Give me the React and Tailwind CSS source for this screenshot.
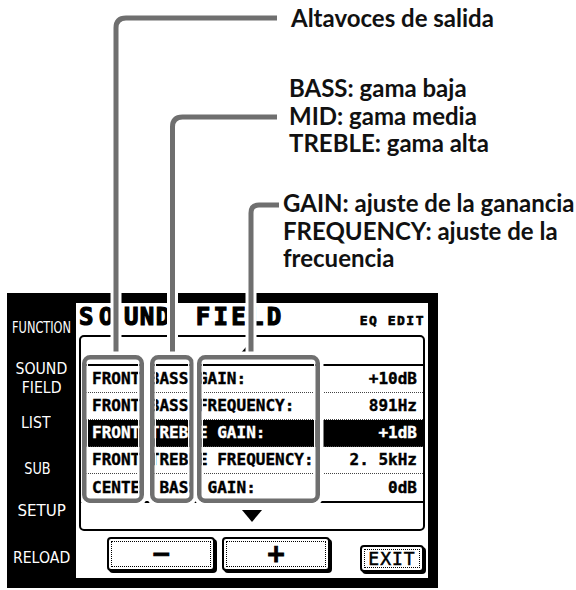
import React from 'react';

const rows = [
  { label: 'FRONT BASS GAIN:', value: '+10dB' },
  { label: 'FRONT BASS FREQUENCY:', value: '891Hz' },
  { label: 'FRONT TREBLE GAIN:', value: '+1dB', active: true },
  { label: 'FRONT TREBLE FREQUENCY:', value: '2. 5kHz' },
  { label: 'CENTER BASS GAIN:', value: '0dB' },
];

// callout leader lines and the grey frames over the list
const Callouts = () => {
  const gray = '#6f6f6f';
  const lines = [
    'M116 356 V28 Q116 18 126 18 H277',
    'M172.5 356 V127 Q172.5 117 182.5 117 H277',
    'M251 356 V213 Q251 205 259 205 H279',
  ];
  const frames = [
    [82, 144],
    [150, 194],
    [197, 320],
  ];
  const y0 = 355;
  const y1 = 503;

  return (
    <svg className="absolute inset-0 pointer-events-none" width="576" height="590" viewBox="0 0 576 590">
      {lines.map((d) => (
        <path key={'w' + d} d={d} fill="none" stroke="#fff" strokeWidth="11" />
      ))}
      {lines.map((d) => (
        <path key={'g' + d} d={d} fill="none" stroke={gray} strokeWidth="5" />
      ))}
      {frames.map(([x0, x1]) => (
        <g key={x0}>
          <rect x={x0 - 1.5} y={y0 - 1.5} width={x1 - x0 + 3} height={y1 - y0 + 3} rx="9.5" fill="none" stroke="#fff" strokeWidth="4" />
          <rect x={x0 + 5.25} y={y0 + 5.25} width={x1 - x0 - 10.5} height={y1 - y0 - 10.5} rx="3" fill="none" stroke="#fff" strokeWidth="1.5" />
          <rect x={x0 + 2.25} y={y0 + 2.25} width={x1 - x0 - 4.5} height={y1 - y0 - 4.5} rx="6" fill="none" stroke={gray} strokeWidth="4.5" />
        </g>
      ))}
      {/* left edge of the list box stays visible next to the first frame */}
      <line x1="80" y1="350" x2="80" y2="508" stroke="#000" strokeWidth="2" />
    </svg>
  );
};

const Sidebar = () => {
  const label = "flex flex-col items-center text-white text-[16px] leading-[17px] font-['DejaVu_Sans',sans-serif] whitespace-nowrap";
  return (
    <div className="w-[69px] flex flex-col pt-[16px]">
      <div className={label}>
        <span className="[transform:scaleX(0.71)]">FUNCTION</span>
      </div>
      <div className={label + ' mt-[22.5px] leading-[19px]'}>
        <span className="[transform:scaleX(0.88)]">SOUND</span>
        <span className="[transform:scaleX(0.88)]">FIELD</span>
      </div>
      <div className={label + ' mt-[17px] pr-[12px]'}>
        <span className="[transform:scaleX(0.88)]">LIST</span>
      </div>
      <div className={label + ' mt-[29px] pr-[8px]'}>
        <span className="[transform:scaleX(0.8)]">SUB</span>
      </div>
      <div className={label + ' mt-[25px]'}>
        <span className="[transform:scaleX(0.94)]">SETUP</span>
      </div>
      <div className={label + ' mt-[30px]'}>
        <span className="[transform:scaleX(0.88)]">RELOAD</span>
      </div>
    </div>
  );
};

const Button = ({ children, className }) => (
  <div
    className={
      'flex items-center justify-center bg-white border-2 border-black rounded-[4px] shadow-[2px_2px_0_0_#000] outline-1 outline-dotted outline-black outline-offset-[-5px] ' +
      className
    }
  >
    {children}
  </div>
);

export default function App() {
  return (
    <div className="relative w-[576px] h-[590px] bg-white overflow-hidden">
      {/* explanation texts */}
      <div className="h-[293px] flex flex-col font-['Lato',sans-serif] font-bold text-[24px] leading-[27.5px] text-[#111] whitespace-nowrap">
        <div className="ml-[291px] mt-[4px]">Altavoces de salida</div>
        <div className="ml-[289px] mt-[42.5px]">
          <div>BASS: gama baja</div>
          <div>MID: gama media</div>
          <div>TREBLE: gama alta</div>
        </div>
        <div className="ml-[283px] mt-[32.5px]">
          <div>GAIN: ajuste de la ganancia</div>
          <div>FREQUENCY: ajuste de la</div>
          <div>frecuencia</div>
        </div>
      </div>

      {/* LCD screen */}
      <div className="ml-[7px] w-[431px] h-[295px] bg-black flex pt-[10px] pb-[10px] pr-[10px]">
        <Sidebar />
        <div className="flex-1 bg-white flex flex-col font-['DejaVu_Sans_Mono',monospace] text-black">
          <div className="h-[32px] pl-[3px] pr-[3px] flex items-center justify-between">
            <div className="flex font-bold text-[24px] leading-none mb-[4px] [-webkit-text-stroke:1.2px_black]">
              <span>S</span>
              <span className="ml-[5.5px]">O</span>
              <span className="ml-[10.5px] tracking-[1.5px]">UND</span>
              <span className="ml-[24px] tracking-[3.3px]">FIELD</span>
            </div>
            <span className="font-bold text-[13px] leading-none tracking-[1.5px] mt-[2px] [-webkit-text-stroke:0.6px_black]">EQ EDIT</span>
          </div>

          <div className="mx-[3px] h-[196px] border-2 border-black rounded-[5px] flex flex-col">
            <div className="h-[27px] flex items-center pl-[158px]">
              <svg width="14" height="8" viewBox="0 0 14 8">
                <path d="M7 0 L14 8 L0 8 Z" fill="#000" />
              </svg>
            </div>
            <div className="border-y-2 border-black">
              {rows.map((r, i) => (
                <div
                  key={r.label}
                  className={
                    'h-[27px] flex items-center justify-between pl-[11px] pr-[6px] font-bold text-[16px] leading-none [-webkit-text-stroke:0.4px_currentColor] ' +
                    (r.active ? 'bg-black text-white ' : '') +
                    (i < rows.length - 1 ? 'border-b border-dotted border-[#444]' : '')
                  }
                >
                  <span className="whitespace-pre">{r.label}</span>
                  <span>{r.value}</span>
                </div>
              ))}
            </div>
            <div className="flex-1 flex items-center justify-center">
              <svg width="20" height="12" viewBox="0 0 20 12">
                <path d="M0 0 L20 0 L10 12 Z" fill="#000" />
              </svg>
            </div>
          </div>

          <div className="flex items-start pt-[6px] pl-[31px]">
            <Button className="w-[108px] h-[34px]">
              <span className="font-['DejaVu_Sans',sans-serif] font-bold text-[24px] leading-none [-webkit-text-stroke:1px_black]">−</span>
            </Button>
            <Button className="w-[108px] h-[34px] ml-[7px]">
              <span className="font-['DejaVu_Sans',sans-serif] font-bold text-[24px] leading-none [-webkit-text-stroke:1px_black]">+</span>
            </Button>
            <Button className="w-[64px] h-[27px] ml-[30px] mt-[8px]">
              <span className="text-[18px] leading-none tracking-[1px] [-webkit-text-stroke:0.5px_black]">EXIT</span>
            </Button>
          </div>
        </div>
      </div>

      <Callouts />
    </div>
  );
}
